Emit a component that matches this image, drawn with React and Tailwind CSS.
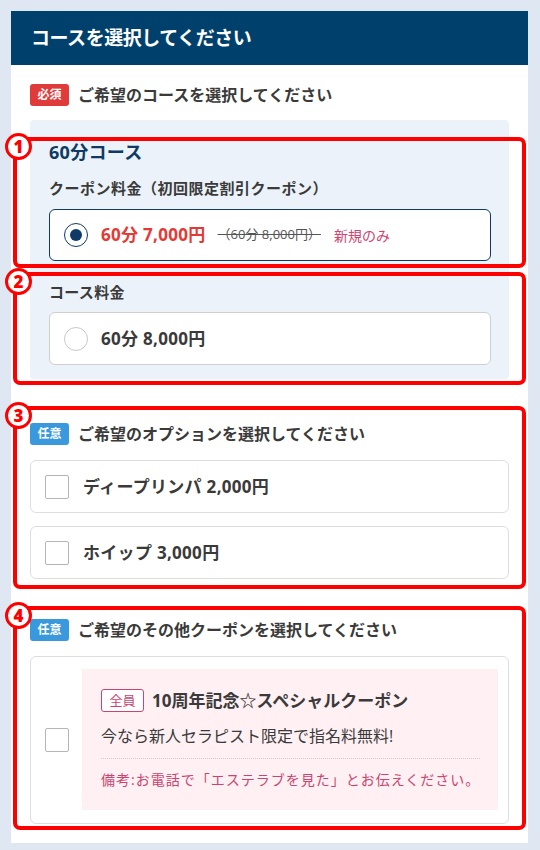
// Course selection form — Japanese booking UI with numbered red annotation frames.

const FONT = { fontFamily: '"Open Sans", "Noto Sans CJK JP", "Noto Sans", sans-serif' };

function Badge({ tone, children }) {
  const tones = {
    red: "bg-[#e03b3b]",
    blue: "bg-[#3a98dc]",
  };
  return (
    <span
      className={`inline-flex items-center justify-center w-[39px] h-[22px] rounded-[3px] text-white text-[12px] font-bold leading-none ${tones[tone]}`}
    >
      {children}
    </span>
  );
}

function SectionLabel({ tone, badge, children }) {
  return (
    <div className="flex items-center gap-[9px]">
      <Badge tone={tone}>{badge}</Badge>
      <span className="text-[16px] font-bold text-[#3a3a3a] leading-none">{children}</span>
    </div>
  );
}

function Radio({ checked }) {
  return checked ? (
    <span className="w-[24px] h-[24px] rounded-full border-[1.5px] border-[#0f3a66] flex items-center justify-center shrink-0">
      <span className="w-[12px] h-[12px] rounded-full bg-[#0f3a66]" />
    </span>
  ) : (
    <span className="w-[24px] h-[24px] rounded-full border border-[#c8c8c8] bg-white shrink-0" />
  );
}

function Checkbox() {
  return <span className="w-[24px] h-[24px] rounded-[2px] border-[1.5px] border-[#b5b5b5] bg-white shrink-0" />;
}

function OptionRow({ children }) {
  return (
    <div className="h-[53px] flex items-center gap-[14px] px-[14px] rounded-[6px] border border-[#dedede] bg-white">
      <Checkbox />
      <span className="text-[17px] font-bold text-[#3a3a3a] tracking-[0.3px]">{children}</span>
    </div>
  );
}

// Red callout frames drawn over the screenshot
function Callout({ n, top, height }) {
  return (
    <div
      className="absolute left-[13px] w-[513px] border-[4px] border-[#ff0000] rounded-[7px] pointer-events-none"
      style={{ top, height }}
    >
      <span className="absolute -left-[12px] -top-[8px] w-[27px] h-[27px] rounded-full bg-white border-[3px] border-[#ff0000] flex items-center justify-center text-[#ff0000] text-[17px] font-black leading-none">
        {n}
      </span>
    </div>
  );
}

export default function App() {
  return (
    <div className="relative w-[540px] h-[850px] bg-[#dfe7f2] pt-[11px] pl-[11px]" style={FONT}>
      <div className="w-[517px] bg-white">
        <header className="h-[54px] bg-[#00406d] flex items-center px-[20px]">
          <h1 className="text-white text-[19px] font-bold tracking-tight">コースを選択してください</h1>
        </header>

        <div className="px-[19px] pt-[19px] pb-[19px]">
          <SectionLabel tone="red" badge="必須">ご希望のコースを選択してください</SectionLabel>

          <div className="mt-[14px] bg-[#ebf2f9] rounded-[4px] pl-[19px] pr-[18px] pt-[23px] pb-[14px]">
            <div className="text-[18px] font-bold text-[#0f3a66] leading-none tracking-[0.3px]">60分コース</div>
            <div className="mt-[20px] text-[15px] font-bold text-[#3a3a3a] leading-none tracking-[0.5px]">
              クーポン料金（初回限定割引クーポン）
            </div>
            <div className="mt-[13px] h-[52px] bg-white border border-[#0f3a66] rounded-[6px] flex items-center px-[14px]">
              <Radio checked />
              <span className="ml-[13px] text-[17px] font-bold text-[#e53935] tracking-[0.3px]">60分 7,000円</span>
              <span className="ml-[12px] text-[13px] text-[#555] line-through">（60分 8,000円）</span>
              <span className="ml-[13px] text-[14px] text-[#d0446e]">新規のみ</span>
            </div>

            <div className="mt-[24px] text-[15px] font-bold text-[#3a3a3a] leading-none tracking-[0.3px]">コース料金</div>
            <div className="mt-[12px] h-[53px] bg-white border border-[#cfcfcf] rounded-[6px] flex items-center px-[14px]">
              <Radio />
              <span className="ml-[13px] text-[17px] font-bold text-[#3a3a3a] tracking-[0.3px]">60分 8,000円</span>
            </div>
          </div>

          <div className="mt-[44px]">
            <SectionLabel tone="blue" badge="任意">ご希望のオプションを選択してください</SectionLabel>
          </div>
          <div className="mt-[15px] flex flex-col gap-[13px]">
            <OptionRow>ディープリンパ 2,000円</OptionRow>
            <OptionRow>ホイップ 3,000円</OptionRow>
          </div>

          <div className="mt-[40px]">
            <SectionLabel tone="blue" badge="任意">ご希望のその他クーポンを選択してください</SectionLabel>
          </div>
          <div className="mt-[15px] rounded-[6px] border border-[#dedede] bg-white pl-[14px] pr-[13px] pt-[12px] pb-[13px] flex items-center gap-[13px]">
            <Checkbox />
            <div className="flex-1 bg-[#fff0f3] pl-[19px] pr-[18px] pt-[20px] pb-[19px]">
              <div className="flex items-center gap-[8px] h-[23px]">
                <span className="inline-flex items-center justify-center w-[43px] h-[23px] border border-[#c9456f] rounded-[3px] bg-white text-[13px] text-[#c9456f] leading-none">
                  全員
                </span>
                <span className="text-[17px] font-bold text-[#3a3a3a] leading-none">10周年記念☆スペシャルクーポン</span>
              </div>
              <div className="mt-[12px] text-[16px] leading-[24px] text-[#3a3a3a]">今なら新人セラピスト限定で指名料無料!</div>
              <div className="mt-[10px] border-t border-dotted border-[#d9c5ca]" />
              <div className="mt-[10px] text-[14px] leading-[22px] text-[#c9456f] tracking-[1px] whitespace-nowrap">
                備考:お電話で「エステラブを見た」とお伝えください。
              </div>
            </div>
          </div>
        </div>
      </div>

      <Callout n="1" top={137} height={131} />
      <Callout n="2" top={272} height={113} />
      <Callout n="3" top={406} height={183} />
      <Callout n="4" top={606} height={224} />
    </div>
  );
}
